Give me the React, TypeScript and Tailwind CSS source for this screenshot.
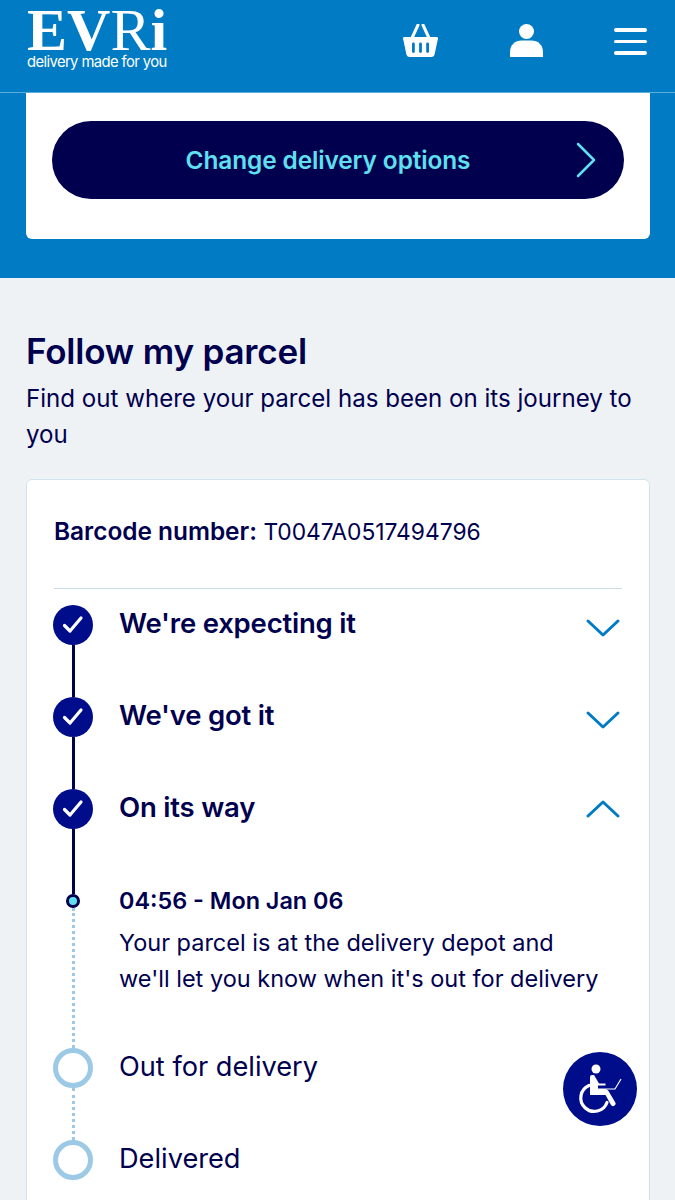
import React from 'react'

const Check = () => (
    <svg width="40" height="40" viewBox="0 0 40 40" fill="none">
        <path d="M11.5 20.5l5.5 5.5 11-13" stroke="#fff" strokeWidth="3.2" strokeLinecap="round" strokeLinejoin="round" />
    </svg>
)

const Chevron = ({ up = false }: { up?: boolean }) => (
    <svg className={up ? 'mr-[2px]' : 'mr-[2px] mt-[5px]'} width="36" height="20" viewBox="0 0 36 20" fill="none">
        <path d={up ? 'M3 17L18 3l15 14' : 'M3 3l15 14L33 3'} stroke="#007bc4" strokeWidth="3" strokeLinecap="round" strokeLinejoin="round" />
    </svg>
)

function DoneStep({ title, open = false }: { title: string; open?: boolean }) {
    return (
        <div className="flex h-[92px]">
            <div className="flex w-10 flex-col items-center">
                <div className="h-10 w-10 shrink-0 rounded-full bg-[#000d8a]">
                    <Check />
                </div>
                <div className="w-[3px] flex-1 bg-[#00004f]" />
            </div>
            <div className="ml-[26px] flex h-10 flex-1 items-center justify-between">
                <h3 className="pb-[3px] text-[27.5px] font-semibold tracking-[-0.2px]">{title}</h3>
                <Chevron up={open} />
            </div>
        </div>
    )
}

function TodoStep({ title, line = true }: { title: string; line?: boolean }) {
    return (
        <div className="flex h-[92px]">
            <div className="flex w-10 flex-col items-center">
                <div className="h-10 w-10 shrink-0 rounded-full border-[5px] border-[#9ccae6] bg-white" />
                {line && <div className="flex-1 border-l-[3px] border-dotted border-[#9ccae6]" />}
            </div>
            <p className="ml-[26px] flex h-10 items-center pb-[2px] text-[27.2px]">{title}</p>
        </div>
    )
}

export default function App() {
    return (
        <div className="relative h-[1200px] overflow-hidden bg-[#eef2f5] font-['Inter',sans-serif] text-[#00004f]">
            {/* Header */}
            <header className="flex h-[93px] items-start justify-between border-b border-[#5aaede] bg-[#007bc4] pl-[27px] pr-[28px] text-white">
                <div className="w-[142px] pt-[5px]">
                    <div className="h-[50px] font-['Liberation_Serif',serif] text-[60px] font-bold leading-[50px]">
                        E<span>V</span><span className="font-normal">R</span>i
                    </div>
                    <div className="-mt-px text-[14.8px] leading-[16px] tracking-[-0.6px]">delivery made for you</div>
                </div>
                <div className="mt-6 flex items-start gap-[71.5px]">
                    <svg className="-ml-px" width="35" height="33" viewBox="0 0 35 33" fill="#fff">
                        <path d="M9 14L15 1M26 14L20 1" stroke="#fff" strokeWidth="3" strokeLinecap="round" fill="none" />
                        <path
                            fillRule="evenodd"
                            d="M1.5 13h32a1.5 1.5 0 0 1 1.5 1.7l-.8 3.3-2.6 12.5A3 3 0 0 1 28.7 33H6.3a3 3 0 0 1-2.9-2.5L.8 18 0 14.7A1.5 1.5 0 0 1 1.5 13zM9 20v7.5a1.4 1.4 0 0 0 2.8 0V20A1.4 1.4 0 0 0 9 20zm7.100 0v7.500a1.400 1.400 0 0 0 2.800 0V20a1.400 1.400 0 0 0-2.800 0zm7.100 0v7.500a1.400 1.400 0 0 0 2.800 0V20a1.400 1.400 0 0 0-2.800 0z"
                        />
                    </svg>
                    <svg width="33" height="33" viewBox="0 0 33 33" fill="#fff">
                        <circle cx="16.5" cy="7.500" r="7.500" />
                        <path d="M0 33v-5C0 21 5 16.500 11.500 16.500h10C28 16.500 33 21 33 28v5z" />
                    </svg>
                    <div className="flex w-[33px] flex-col gap-2 pt-[4px]">
                        <span className="h-[3.500px] rounded-full bg-white" />
                        <span className="h-[3.500px] rounded-full bg-white" />
                        <span className="h-[3.500px] rounded-full bg-white" />
                    </div>
                </div>
            </header>

            {/* Delivery options */}
            <section className="h-[185px] bg-[#007bc4] pl-[26px] pr-[25px]">
                <div className="h-[146px] rounded-b-md bg-white px-[26px] pt-7">
                    <button className="relative flex h-[78px] w-full items-center justify-center rounded-full bg-[#00004f] pr-[20px] text-[24.4px] font-semibold tracking-[-0.1px] text-[#5ee0f0]">
                        Change delivery options
                        <svg className="absolute right-[27px] top-[21px]" width="22" height="36" viewBox="0 0 22 36" fill="none">
                            <path d="M3 2l16 16L3 34" stroke="#5ee0f0" strokeWidth="2.500" strokeLinecap="round" strokeLinejoin="round" />
                        </svg>
                    </button>
                </div>
            </section>

            {/* Follow my parcel */}
            <section className="pl-[26px] pr-[25px] pt-[51px]">
                <h2 className="text-[35px] font-semibold leading-[44px] tracking-[-0.2px]">Follow my parcel</h2>
                <p className="mt-[8px] text-[24.1px] leading-[36px]">Find out where your parcel has been on its journey to you</p>

                <div className="mt-[26px] rounded-t-md border border-[#d3e3ee] bg-white px-[26px] pb-10 pt-[33px]">
                    <p className="mx-px h-[76px] border-b border-[#c9deea] text-[22.8px] leading-[36px]">
                        <span className="text-[24.4px] font-semibold">Barcode number:</span> T0047A0517494796
                    </p>

                    <div className="pt-4">
                        <DoneStep title="We're expecting it" />
                        <DoneStep title="We've got it" />
                        <DoneStep title="On its way" open />

                        <div className="flex h-[167px]">
                            <div className="flex w-10 flex-col items-center">
                                <div className="h-[13px] w-[3px] bg-[#00004f]" />
                                <div className="h-[14px] w-[14px] shrink-0 rounded-full border-[3px] border-[#00004f] bg-[#5ee0f0]" />
                                <div className="flex-1 border-l-[3px] border-dotted border-[#9ccae6]" />
                            </div>
                            <div className="ml-[26px] flex-1">
                                <p className="text-[23.4px] font-semibold leading-[40px]">04:56 - Mon Jan 06</p>
                                <p className="mt-[4px] max-w-[485px] text-[23.5px] leading-[36px]">
                                    Your parcel is at the delivery depot and we'll let you know when it's out for delivery
                                </p>
                            </div>
                        </div>

                        <TodoStep title="Out for delivery" />
                        <TodoStep title="Delivered" line={false} />
                    </div>
                </div>
            </section>

            {/* Accessibility button */}
            <button className="absolute left-[563px] top-[1052px] h-[74px] w-[74px] rounded-full bg-[#000d8a]">
                <svg width="74" height="74" viewBox="0 0 74 74" fill="none">
                    <circle cx="33" cy="17" r="4.500" fill="#fff" />
                    <path d="M27 25a2 2 0 0 1 2-2h2l5 8.500h6.500v2H35V37h7a4 4 0 0 1 3.500 2l6.500 11a2 2 0 0 1-4 3l-5.500-10H27z" fill="#fff" />
                    <path d="M26 33.500a13.500 13.500 0 1 0 18 17" stroke="#fff" strokeWidth="3.200" strokeLinecap="round" />
                    <path d="M35 37h17l6-10" stroke="#fff" strokeWidth="1.200" />
                </svg>
            </button>
        </div>
    )
}
